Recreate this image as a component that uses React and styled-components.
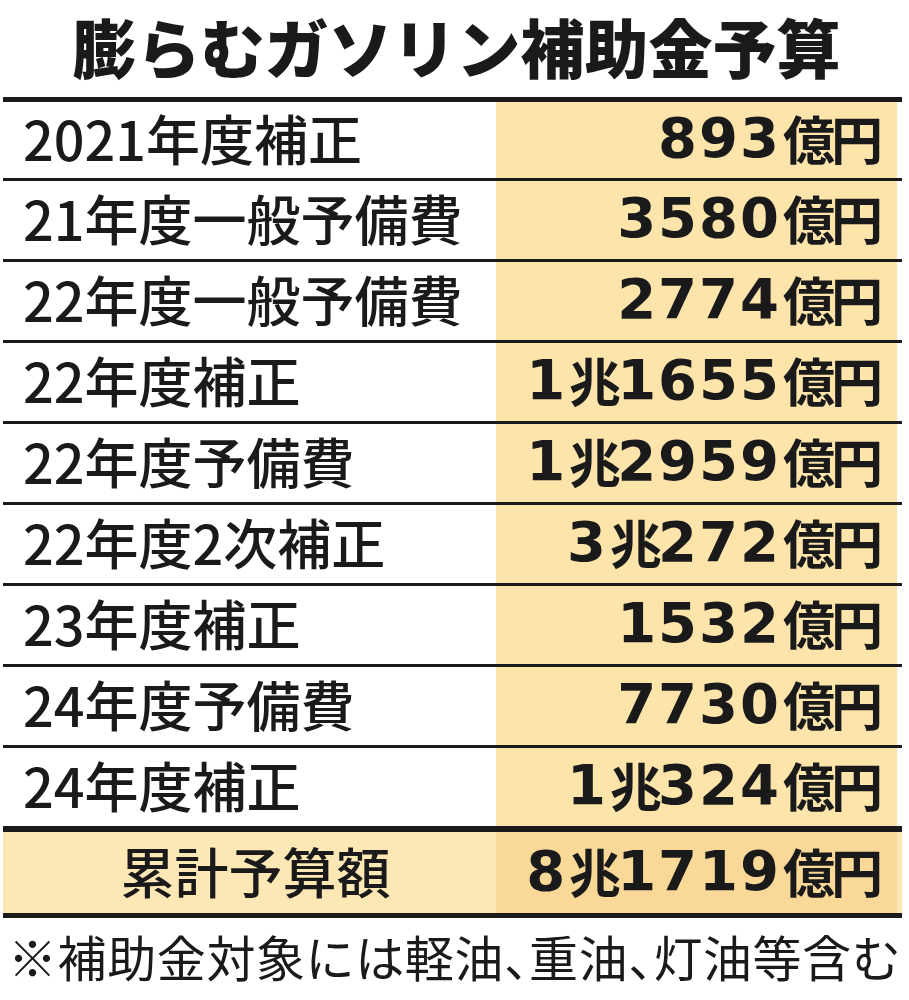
import React from "react"
import styled, { createGlobalStyle } from "styled-components"

const rows = [
  { label: "2021年度補正", value: "893億円" },
  { label: "21年度一般予備費", value: "3580億円" },
  { label: "22年度一般予備費", value: "2774億円" },
  { label: "22年度補正", value: "1兆1655億円" },
  { label: "22年度予備費", value: "1兆2959億円" },
  { label: "22年度2次補正", value: "3兆272億円" },
  { label: "23年度補正", value: "1532億円" },
  { label: "24年度予備費", value: "7730億円" },
  { label: "24年度補正", value: "1兆324億円" },
]

// split "1兆1655億円" into digit runs and unit runs
const Amount = ({ text }) =>
  text.match(/\d+|\D+/g).map((part, i) =>
    /\d/.test(part) ? <Num key={i}>{part}</Num> : <Unit key={i}>{part}</Unit>
  )

const App = () => (
  <>
    <GlobalStyle />
    <Page>
      <Title>膨らむガソリン補助金予算</Title>
      <Table>
        {rows.map(r => (
          <Row key={r.label}>
            <Label>{r.label}</Label>
            <Value>
              <Amount text={r.value} />
            </Value>
          </Row>
        ))}
        <TotalRow>
          <Label $center>累計予算額</Label>
          <Value $total>
            <Amount text="8兆1719億円" />
          </Value>
        </TotalRow>
      </Table>
      <Note>※補助金対象には軽油、重油、灯油等含む</Note>
    </Page>
  </>
)

export default App

const GlobalStyle = createGlobalStyle`
  body {
    margin: 0;
    background: #fff;
    color: #1a1a1a;
    font-family: "Noto Sans CJK JP", "Noto Sans", sans-serif;
  }
`

const Page = styled.div`
  width: 909px;
  height: 1000px;
  overflow: hidden;
`

const Title = styled.h1`
  margin: 0;
  height: 97px;
  line-height: 90px;
  text-align: center;
  font-size: 64px;
  font-weight: 900;
  padding-left: 4px;
  box-sizing: border-box;
`

const Table = styled.div`
  margin: 0 7px 0 3px;
  border-top: 5px solid #1a1a1a;
  border-bottom: 5px solid #1a1a1a;
`

const Row = styled.div`
  display: grid;
  grid-template-columns: 493px 1fr;
  height: 78px;
  padding-right: 5px;
  border-bottom: 3px solid #1a1a1a;

  &:first-child {
    height: 76px;
  }

  &:nth-child(9) {
    border-bottom-width: 6px;
  }
`

const TotalRow = styled(Row)`
  height: 81px;
  border-bottom: none;
  background: #fde7b5;
`

const Label = styled.div`
  display: flex;
  align-items: center;
  justify-content: ${p => (p.$center ? "center" : "flex-start")};
  padding-left: ${p => (p.$center ? "12px" : "20px")};
  padding-bottom: 4px;
  font-size: 54px;
  font-weight: 500;
  line-height: 1;
  white-space: nowrap;
`

const Value = styled.div`
  display: flex;
  align-items: center;
  justify-content: flex-end;
  padding-right: 18px;
  padding-bottom: 4px;
  background: ${p => (p.$total ? "#f9d898" : "#fce4ab")};
  line-height: 1;
  white-space: nowrap;
`

const Num = styled.span`
  font-family: "DejaVu Sans", "Liberation Sans", sans-serif;
  font-weight: 700;
  font-size: 56px;
  letter-spacing: 2px;
`

const Unit = styled.span`
  font-family: "Noto Sans CJK JP", sans-serif;
  font-weight: 700;
  font-size: 52px;
  letter-spacing: -4px;
  margin-left: 2px;
`

const Note = styled.p`
  margin: 0;
  padding-left: 8px;
  height: 76px;
  line-height: 76px;
  font-size: 49px;
  font-weight: 400;
  letter-spacing: 0.6px;
  font-feature-settings: "halt";
  white-space: nowrap;
`
